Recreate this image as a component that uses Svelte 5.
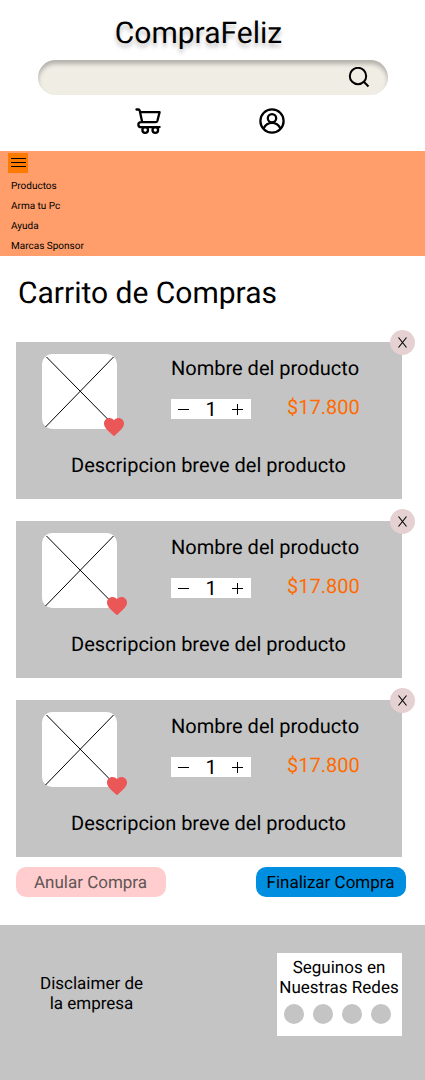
<script>
  const links = ['Productos', 'Arma tu Pc', 'Ayuda', 'Marcas Sponsor'];
  const items = [
    { id: 1, name: 'Nombre del producto', price: '$17.800', text: 'Descripcion breve del producto', heart: 'near' },
    { id: 2, name: 'Nombre del producto', price: '$17.800', text: 'Descripcion breve del producto', heart: 'far' },
    { id: 3, name: 'Nombre del producto', price: '$17.800', text: 'Descripcion breve del producto', heart: 'low' }
  ];
</script>

<div class="page">
  <header>
    <div class="brand">CompraFeliz</div>
    <div class="search">
      <svg width="22" height="22" viewBox="0 0 22 22" fill="none" stroke="#000" stroke-width="2">
        <circle cx="10" cy="9" r="8.2" />
        <path d="M15.8 14.8L20.5 19.5" />
      </svg>
    </div>
    <div class="actions">
      <svg width="26" height="26" viewBox="0 0 26 26" fill="none" stroke="#000" stroke-width="2.3" stroke-linecap="round" stroke-linejoin="round">
        <path d="M1.5 1.5H3.4Q4.4 1.5 4.7 2.6L7.2 14.2M5.3 4.2H24.6L22.4 12.8Q22 14.2 20.6 14.2H6.2C2.4 14.2 2.4 19.1 6.2 19.1H24.6" />
        <circle cx="10.2" cy="22" r="2.8" />
        <circle cx="20.3" cy="22" r="2.8" />
      </svg>
      <svg width="26" height="26" viewBox="0 0 26 26" fill="none" stroke="#000" stroke-width="2.3">
        <circle cx="13" cy="13" r="11.6" />
        <circle cx="13" cy="10.3" r="4.2" />
        <path d="M4.6 20.6C8.2 13 17.8 13 21.4 20.6" />
      </svg>
    </div>
  </header>

  <nav>
    <div class="burger"><i></i><i></i><i></i></div>
    {#each links as link}
      <div class="link">{link}</div>
    {/each}
  </nav>

  <main>
    <h1>Carrito de Compras</h1>
    <div class="cards">
      {#each items as item (item.id)}
        <article>
          <div class="close">
            <svg width="9" height="11" viewBox="0 0 9 11" stroke="#000" stroke-width="1.1"><path d="M.5 .5L8.5 10.5M8.5 .5L.5 10.5" /></svg>
          </div>
          <div class="top">
            <div class="thumb">
              <svg width="75" height="75" viewBox="0 0 75 75" stroke="#000" stroke-width="1"><path d="M4.5 3L71.5 71M71.5 3L3.5 73" /></svg>
              <svg class="heart {item.heart}" width="20" height="18" viewBox="0 0 20 18"><path fill="#eb5757" d="M10 18.2L8.6 17C3.4 12.4 0 9.4 0 5.6C0 2.5 2.4 .1 5.5 .1C7.2 .1 8.9 .9 10 2.2C11.1 .9 12.8 .1 14.5 .1C17.6 .1 20 2.5 20 5.6C20 9.4 16.6 12.4 11.4 17Z" /></svg>
            </div>
            <div class="info">
              <div class="name">{item.name}</div>
              <div class="buy">
                <div class="stepper">
                  <svg width="11" height="11" viewBox="0 0 11 11" stroke="#000"><path d="M0 5.5H11" /></svg>
                  <span>1</span>
                  <svg width="11" height="11" viewBox="0 0 11 11" stroke="#000"><path d="M0 5.5H11M5.5 0V11" /></svg>
                </div>
                <div class="price">{item.price}</div>
              </div>
            </div>
          </div>
          <div class="text">{item.text}</div>
        </article>
      {/each}
    </div>
    <div class="buttons">
      <div class="btn cancel">Anular Compra</div>
      <div class="btn finish">Finalizar Compra</div>
    </div>
  </main>

  <footer>
    <div class="disclaimer">Disclaimer de<br />la empresa</div>
    <div class="social">
      <div class="follow">Seguinos en<br />Nuestras Redes</div>
      <div class="dots"><i></i><i></i><i></i><i></i></div>
    </div>
  </footer>
</div>

<style>
  .page { width: 425px; height: 1080px; background: #fff; color: #000; font-family: Roboto, sans-serif; text-rendering: geometricPrecision; overflow: hidden; display: flex; flex-direction: column; }
  .page * { box-sizing: border-box; }
  svg { display: block; flex: none; }
  header { height: 151px; padding: 16px 37px 0 38px; flex: none; }
  .brand { width: 321px; height: 44px; line-height: 35px; font-size: 30px; text-align: center; text-shadow: 0 4px 4px rgba(0, 0, 0, .25); white-space: nowrap; }
  .search { height: 35px; border-radius: 18px; background: #f0ede5; box-shadow: inset 0 4px 4px rgba(0, 0, 0, .25); display: flex; align-items: center; justify-content: flex-end; padding-right: 18px; }
  .actions { display: flex; gap: 98px; padding: 13px 0 0 97px; }
  nav { height: 105px; background: #ff9e6b; padding: 2px 0 0 8px; flex: none; }
  .burger { width: 20px; height: 20px; background: #ff7a00; display: flex; flex-direction: column; gap: 3px; padding: 5px 2px 0 3px; margin-bottom: 4px; }
  .burger i { height: 1px; background: #000; }
  .link { height: 20px; line-height: 20px; font-size: 10px; padding-left: 3px; }
  main { height: 669px; flex: none; }
  h1 { margin: 0; height: 86px; padding: 20px 0 0 18px; font-size: 30px; line-height: 35px; font-weight: 400; }
  .cards { display: flex; flex-direction: column; gap: 22px; padding-left: 16px; }
  article { width: 386px; height: 157px; background: #c4c4c4; position: relative; padding: 12px 0 0 26px; }
  .close { position: absolute; right: -13px; top: -12px; width: 25px; height: 25px; border-radius: 50%; background: #e5d1d1; display: flex; align-items: center; justify-content: center; }
  .top { display: flex; gap: 54px; }
  .thumb { width: 75px; height: 75px; border-radius: 10px; background: #fff; position: relative; }
  .heart { position: absolute; left: 65px; top: 64px; }
  .near { left: 62px; }
  .low { top: 65px; }
  .name { font-size: 20px; line-height: 23px; padding-top: 3px; white-space: nowrap; }
  .buy { display: flex; gap: 36px; padding-top: 16px; }
  .stepper { width: 80px; height: 20px; margin-top: 3px; background: #fff; display: flex; align-items: center; justify-content: space-between; padding: 0 8px 0 7px; font-size: 20px; line-height: 22px; }
  .stepper span { padding-left: 1px; }
  .price { font-size: 20px; line-height: 23px; color: #ff6b00; }
  .text { font-size: 20px; line-height: 23px; margin-top: 25px; padding-left: 29px; }
  .buttons { display: flex; gap: 90px; padding: 10px 0 0 16px; }
  .btn { width: 150px; height: 30px; border-radius: 10px; padding: 1px 1px 0 0; line-height: 31px; font-size: 17px; text-align: center; white-space: nowrap; }
  .cancel { background: #ffcdcd; color: #605555; }
  .finish { background: #008ee0; }
  footer { flex: 1; background: #c4c4c4; display: flex; justify-content: space-between; padding: 28px 23px 0 40px; font-size: 17px; line-height: 20px; text-align: center; }
  .disclaimer { padding-top: 21px; white-space: nowrap; }
  .social { width: 125px; height: 83px; background: #fff; padding-top: 5px; }
  .follow { white-space: nowrap; padding-right: 1px; }
  .dots { display: flex; gap: 9px; padding: 6px 0 0 7px; }
  .dots i { width: 20px; height: 20px; border-radius: 50%; background: #c4c4c4; }
</style>
